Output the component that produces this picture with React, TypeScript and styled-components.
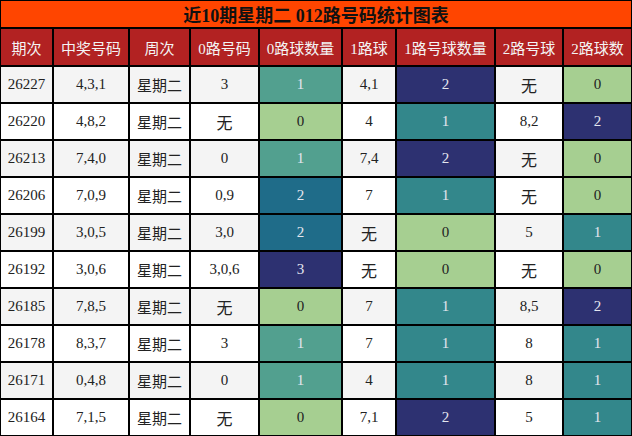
import styled, { createGlobalStyle } from "styled-components";

const GlobalStyle = createGlobalStyle`
  html, body {
    margin: 0;
    padding: 0;
    background: #fff;
  }
`;

const Sheet = styled.div`
  width: 632px;
  height: 436px;
  box-sizing: border-box;
  padding: 1px;
  background: #000;
  display: grid;
  grid-template-columns: 51px 74px 59px 67px 81px 52px 97px 66px 67px;
  grid-template-rows: 26px 36px repeat(10, 35px);
  gap: 2px;
  font-family: "Liberation Serif", "Noto Sans CJK SC", serif;
`;

const Title = styled.div`
  grid-column: 1 / -1;
  background: #ff4500;
  color: #111;
  font-size: 18px;
  font-weight: bold;
  display: flex;
  align-items: center;
  justify-content: center;
`;

const Head = styled.div`
  background: #b22222;
  color: #f4f4f4;
  font-size: 15px;
  display: flex;
  align-items: center;
  justify-content: center;
  white-space: nowrap;
`;

const Cell = styled.div<{ $bg: string; $light?: boolean; $big?: boolean }>`
  background: ${(p) => p.$bg};
  color: ${(p) => (p.$light ? "#e4e6ee" : "#222")};
  font-size: ${(p) => (p.$big ? "16px" : "15px")};
  display: flex;
  align-items: center;
  justify-content: center;
  white-space: nowrap;
`;

const GREEN = "#a6cf91";
const NAVY = "#2d3171";
const scale0 = [GREEN, "#52a08f", "#1f6c89", NAVY];
const scale12 = [GREEN, "#33878b", NAVY];

type Row = [string, string, string, number, string, number, string, number];

const rows: Row[] = [
  ["26227", "4,3,1", "3", 1, "4,1", 2, "无", 0],
  ["26220", "4,8,2", "无", 0, "4", 1, "8,2", 2],
  ["26213", "7,4,0", "0", 1, "7,4", 2, "无", 0],
  ["26206", "7,0,9", "0,9", 2, "7", 1, "无", 0],
  ["26199", "3,0,5", "3,0", 2, "无", 0, "5", 1],
  ["26192", "3,0,6", "3,0,6", 3, "无", 0, "无", 0],
  ["26185", "7,8,5", "无", 0, "7", 1, "8,5", 2],
  ["26178", "8,3,7", "3", 1, "7", 1, "8", 1],
  ["26171", "0,4,8", "0", 1, "4", 1, "8", 1],
  ["26164", "7,1,5", "无", 0, "7,1", 2, "5", 1],
];

const heads = ["期次", "中奖号码", "周次", "0路号码", "0路球数量", "1路球", "1路号球数量", "2路号球", "2路球数"];

export default function App() {
  return (
    <>
      <GlobalStyle />
      <Sheet>
        <Title>近10期星期二 012路号码统计图表</Title>
        {heads.map((h) => (
          <Head key={h}>{h}</Head>
        ))}
        {rows.map((r, i) => {
          const bg = i % 2 === 0 ? "#f4f4f4" : "#ffffff";
          const [issue, nums, z, zc, o, oc, t, tc] = r;
          return [
            <Cell key={i + "a"} $bg={bg}>{issue}</Cell>,
            <Cell key={i + "b"} $bg={bg}>{nums}</Cell>,
            <Cell key={i + "c"} $bg={bg}>星期二</Cell>,
            <Cell key={i + "d"} $bg={bg} $big={z === "无"}>{z}</Cell>,
            <Cell key={i + "e"} $bg={scale0[zc]} $light={zc > 0}>{zc}</Cell>,
            <Cell key={i + "f"} $bg={bg} $big={o === "无"}>{o}</Cell>,
            <Cell key={i + "g"} $bg={scale12[oc]} $light={oc > 0}>{oc}</Cell>,
            <Cell key={i + "h"} $bg={bg} $big={t === "无"}>{t}</Cell>,
            <Cell key={i + "i"} $bg={scale12[tc]} $light={tc > 0}>{tc}</Cell>,
          ];
        })}
      </Sheet>
    </>
  );
}
